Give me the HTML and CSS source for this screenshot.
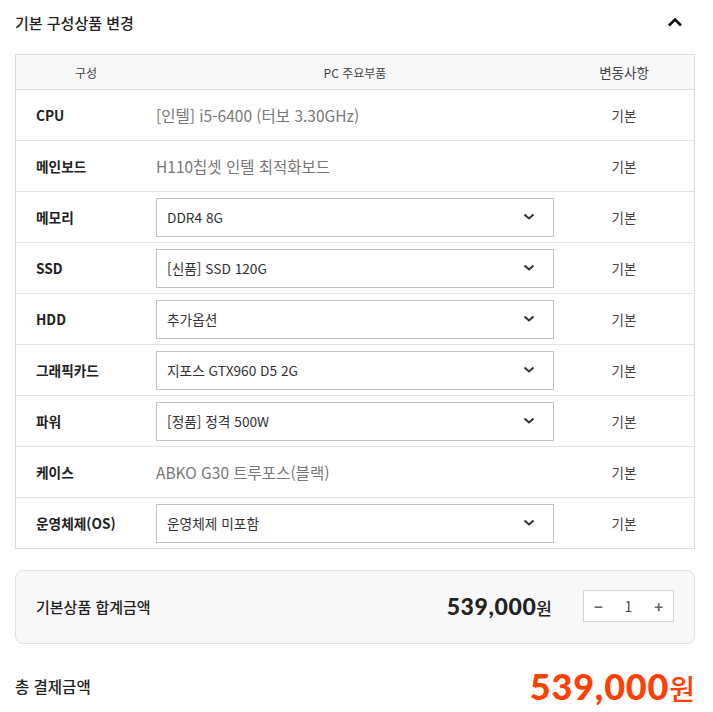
FILE: index.html
```html
<!DOCTYPE html>
<html lang="ko">
<head>
<meta charset="utf-8">
<link rel="stylesheet" href="styles.css">
</head>
<body>
<div class="wrap">
  <div class="title-row">
    <h2 class="title">기본 구성상품 변경</h2>
    <svg class="chev-up" width="16" height="12" viewBox="0 0 16 12"><path d="M2 9.5 L8 3.5 L14 9.5" fill="none" stroke="#111" stroke-width="2.6"/></svg>
  </div>
  <div class="table">
    <div class="row head">
      <div class="c1">구성</div><div class="c2">PC 주요부품</div><div class="c3">변동사항</div>
    </div>
    <div class="row"><div class="c1 lbl">CPU</div><div class="c2"><span class="plain">[인텔] i5-6400 (터보 3.30GHz)</span></div><div class="c3">기본</div></div>
    <div class="row"><div class="c1 lbl">메인보드</div><div class="c2"><span class="plain">H110칩셋 인텔 최적화보드</span></div><div class="c3">기본</div></div>
    <div class="row"><div class="c1 lbl">메모리</div><div class="c2"><div class="sel"><span>DDR4 8G</span><svg width="12" height="8" viewBox="0 0 12 8"><path d="M1.5 1.5 L6 5.5 L10.5 1.5" fill="none" stroke="#333" stroke-width="2"/></svg></div></div><div class="c3">기본</div></div>
    <div class="row"><div class="c1 lbl">SSD</div><div class="c2"><div class="sel"><span>[신품] SSD 120G</span><svg width="12" height="8" viewBox="0 0 12 8"><path d="M1.5 1.5 L6 5.5 L10.5 1.5" fill="none" stroke="#333" stroke-width="2"/></svg></div></div><div class="c3">기본</div></div>
    <div class="row"><div class="c1 lbl">HDD</div><div class="c2"><div class="sel"><span>추가옵션</span><svg width="12" height="8" viewBox="0 0 12 8"><path d="M1.5 1.5 L6 5.5 L10.5 1.5" fill="none" stroke="#333" stroke-width="2"/></svg></div></div><div class="c3">기본</div></div>
    <div class="row"><div class="c1 lbl">그래픽카드</div><div class="c2"><div class="sel"><span>지포스 GTX960 D5 2G</span><svg width="12" height="8" viewBox="0 0 12 8"><path d="M1.5 1.5 L6 5.5 L10.5 1.5" fill="none" stroke="#333" stroke-width="2"/></svg></div></div><div class="c3">기본</div></div>
    <div class="row"><div class="c1 lbl">파워</div><div class="c2"><div class="sel"><span>[정품] 정격 500W</span><svg width="12" height="8" viewBox="0 0 12 8"><path d="M1.5 1.5 L6 5.5 L10.5 1.5" fill="none" stroke="#333" stroke-width="2"/></svg></div></div><div class="c3">기본</div></div>
    <div class="row"><div class="c1 lbl">케이스</div><div class="c2"><span class="plain">ABKO G30 트루포스(블랙)</span></div><div class="c3">기본</div></div>
    <div class="row"><div class="c1 lbl">운영체제(OS)</div><div class="c2"><div class="sel"><span>운영체제 미포함</span><svg width="12" height="8" viewBox="0 0 12 8"><path d="M1.5 1.5 L6 5.5 L10.5 1.5" fill="none" stroke="#333" stroke-width="2"/></svg></div></div><div class="c3">기본</div></div>
  </div>
  <div class="summary">
    <div class="sum-label">기본상품 합계금액</div>
    <div class="sum-price"><span class="num">539,000</span><span class="won">원</span></div>
    <div class="qty"><span class="qbtn">−</span><span class="qv">1</span><span class="qbtn">+</span></div>
  </div>
  <div class="total">
    <div class="total-label">총 결제금액</div>
    <div class="total-price"><span class="num">539,000</span><span class="won">원</span></div>
  </div>
</div>
</body>
</html>
```
FILE: styles.css
```css
* { box-sizing: border-box; }
html, body { margin: 0; padding: 0; background: #fff; }
body { font-family: "Noto Sans CJK KR", "Noto Sans", sans-serif; color: #222; }
.wrap { padding: 0 18px 0 15px; width: 713px; }
.title-row { display: flex; align-items: center; justify-content: space-between; height: 46px; padding-bottom: 2px; }
.title { margin: 0; font-size: 15px; font-weight: 500; color: #222; }
.chev-up { margin-right: 12px; }
.table { margin-top: 8px; border: 1px solid #dcdcdc; }
.row { display: grid; grid-template-columns: 140px 1fr 140px; align-items: center; height: 51px; border-top: 1px solid #e3e3e3; }
.row.head { height: 35px; border-top: 0; background: #f8f8f8; border-bottom: 1px solid #dcdcdc; font-size: 12px; color: #444; }
.row.head + .row { border-top: 0; height: 50px; }
.head .c1, .head .c2, .head .c3 { text-align: center; }
.c1.lbl { padding-left: 20px; font-size: 13.7px; font-weight: 700; color: #222; }
.c3 { text-align: center; font-size: 13.5px; color: #444; }
.plain { font-size: 15.5px; color: #777; font-weight: 400; }
.sel { display: flex; align-items: center; justify-content: space-between; height: 39px; border: 1px solid #c2c2c2; padding: 0 18px 0 10px; font-size: 13.7px; color: #333; }
.sel svg { display: block; }
.summary { margin-top: 21px; display: flex; align-items: center; height: 74px; background: #f8f8f8; border: 1px solid #e0e0e0; border-radius: 8px; padding: 0 20px 2px; }
.sum-label { font-size: 15px; font-weight: 500; color: #222; flex: 1; }
.sum-price { display: flex; align-items: baseline; color: #222; }
.sum-price .num { font-family: "Lato", "Noto Sans", sans-serif; font-weight: 900; font-size: 23px; letter-spacing: 0.6px; }
.sum-price .won { font-size: 17px; font-weight: 500; margin-left: 0; }
.qty { display: flex; align-items: center; justify-content: space-between; width: 91px; height: 32px; margin-left: 31px; background: #fff; border: 1px solid #d6d6d6; padding: 0 10px; font-size: 14px; color: #666; }
.qbtn { font-weight: 700; color: #666; font-size: 15px; }
.qv { font-size: 14px; color: #444; }
.total { display: flex; align-items: center; justify-content: space-between; height: 84px; }
.total-label { font-size: 15.5px; font-weight: 500; color: #222; }
.total-price { display: flex; align-items: baseline; color: #ff4000; }
.total-price .num { font-family: "Lato", "Noto Sans", sans-serif; font-weight: 900; font-size: 36px; letter-spacing: 0.8px; }
.total-price .won { font-size: 28px; font-weight: 500; margin-left: 0; }
```
